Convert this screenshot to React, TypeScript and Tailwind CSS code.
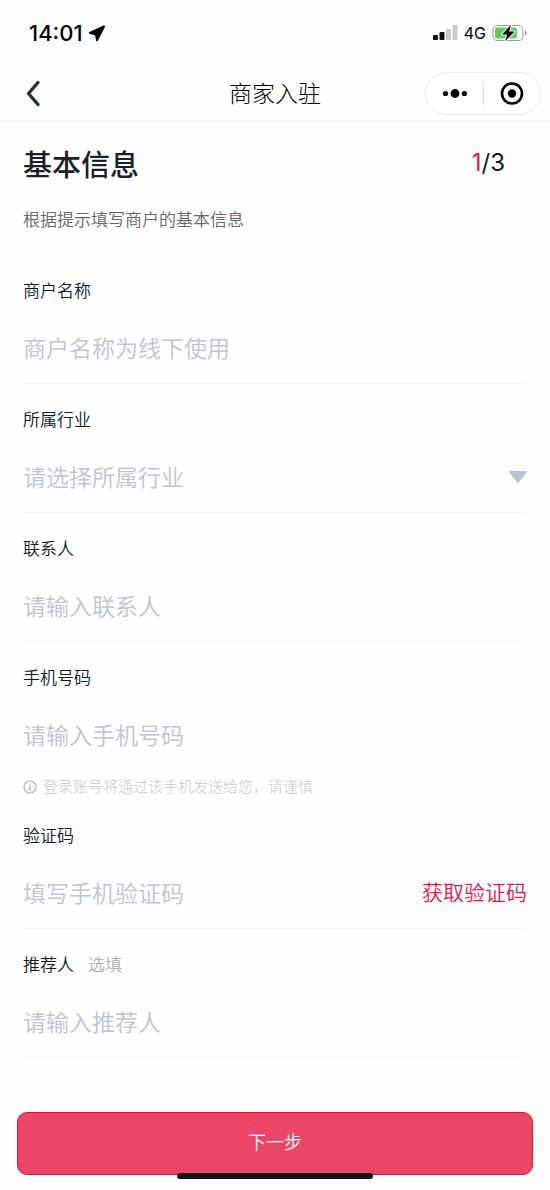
import { FormEvent, ReactNode, useState } from 'react';

interface FieldProps {
  id: string;
  label: string;
  optional?: string;
  children: ReactNode;
}

const controlClass =
  'w-full min-w-0 flex-1 appearance-none bg-transparent text-[23px] font-[350] text-[#30343c] outline-none placeholder:text-[#c1c4cd] placeholder:opacity-100';

const Field = ({ id, label, optional, children }: FieldProps) => (
  <div className="border-b border-[#f7f7f8] pt-[23px]">
    <div className="mb-[10px] flex items-center leading-6">
      <label htmlFor={id} className="text-[17px] font-[350] text-[#15181f]">
        {label}
      </label>
      {optional && (
        <span className="ml-[14px] text-[17px] font-[350] text-[#b0b0b2]">
          {optional}
        </span>
      )}
    </div>
    <div className="relative flex h-[71px] items-center">{children}</div>
  </div>
);

const StatusBar = () => (
  <div className="flex h-[66px] items-center justify-between pr-[22px] pl-[29px]">
    <div className="flex items-center gap-[5px] font-['Inter'] text-[22px] font-medium text-black">
      <span>14:01</span>
      <svg width="18" height="17" viewBox="0 0 18 17" aria-hidden="true">
        <path
          d="M16 1.500 1.800 7.900 8 9.500 9 15.200Z"
          fill="#000"
          stroke="#000"
          strokeWidth="2"
          strokeLinejoin="round"
        />
      </svg>
    </div>
    <div className="flex items-center gap-[6px]">
      <svg width="25" height="16" viewBox="0 0 25 16" aria-hidden="true">
        <rect x="0" y="10" width="5" height="5" rx="1" fill="#111" />
        <rect x="6.500" y="7" width="5" height="8" rx="1" fill="#111" />
        <rect x="13" y="4" width="5" height="11" rx="1" fill="#ccc" />
        <rect x="19.500" y="0" width="5" height="15" rx="1" fill="#ccc" />
      </svg>
      <span className="font-['Inter'] text-base text-black">4G</span>
      <svg width="36" height="18" viewBox="0 0 36 18" aria-hidden="true">
        <rect
          x="1"
          y="1.500"
          width="30"
          height="15"
          rx="4.500"
          fill="#fff"
          stroke="#9b9b9b"
        />
        <rect x="3" y="3.500" width="22" height="11" rx="2.500" fill="#5fcb62" />
        <path d="M33 6.500c2 .8 2 4.200 0 5Z" fill="#8f8f8f" />
        <path
          d="M19 .8 10 10.400h5.200L13 17.200 22.600 7.600h-5.400Z"
          fill="#000"
          stroke="#fff"
          strokeWidth="2"
          strokeLinejoin="round"
          paintOrder="stroke"
        />
      </svg>
    </div>
  </div>
);

const NavBar = () => (
  <header className="grid h-14 grid-cols-[1fr_auto_1fr] items-center border-b border-[#ececed] px-[9px]">
    <button type="button" aria-label="返回" className="w-12 pl-[15px]">
      <svg width="18" height="28" viewBox="0 0 18 28" aria-hidden="true">
        <path
          d="M14 2.500 4.500 13.500 14 24.500"
          fill="none"
          stroke="#25303d"
          strokeWidth="3.400"
          strokeLinecap="round"
          strokeLinejoin="round"
        />
      </svg>
    </button>
    <h1 className="pb-[2px] text-[23px] font-light text-black">商家入驻</h1>
    <div className="flex h-[43px] w-[116px] items-center justify-self-end rounded-full border border-[#ebebec] bg-white">
      <button
        type="button"
        aria-label="更多"
        className="flex flex-1 justify-center"
      >
        <svg width="26" height="10" viewBox="0 0 26 10" aria-hidden="true">
          <circle cx="4.500" cy="4.500" r="2.600" />
          <circle cx="14" cy="4.500" r="4.400" />
          <circle cx="23.400" cy="4.500" r="2.600" />
        </svg>
      </button>
      <span className="h-[25px] w-px bg-[#dededf]" />
      <button
        type="button"
        aria-label="关闭"
        className="flex flex-1 justify-center"
      >
        <svg width="24" height="24" viewBox="0 0 24 24" aria-hidden="true">
          <circle
            cx="12"
            cy="11.500"
            r="10"
            fill="none"
            stroke="#000"
            strokeWidth="2.600"
          />
          <circle cx="12" cy="11.500" r="4.200" />
        </svg>
      </button>
    </div>
  </header>
);

export default function App() {
  const [industry, setIndustry] = useState('');

  const handleSubmit = (e: FormEvent) => e.preventDefault();

  return (
    <div className="relative flex min-h-screen flex-col bg-[#fefefe] font-['Noto_Sans_CJK_SC',sans-serif]">
      <StatusBar />
      <NavBar />

      <form onSubmit={handleSubmit} className="flex flex-1 flex-col">
        <div className="px-[23px]">
          <div className="flex items-center justify-between pt-[19px] pr-[22px] leading-[44px]">
            <h2 className="text-[29px] font-medium text-[#1b2129]">基本信息</h2>
            <p className="font-['Inter'] text-[24px] text-[#15181f]">
              <span className="text-[#ec1550]">1</span>/3
            </p>
          </div>
          <p className="mt-[22px] mb-6 text-[17px] leading-6 font-[350] text-[#666]">
            根据提示填写商户的基本信息
          </p>

          <Field id="merchant" label="商户名称">
            <input
              id="merchant"
              className={controlClass}
              placeholder="商户名称为线下使用"
            />
          </Field>
          <Field id="industry" label="所属行业">
            <select
              id="industry"
              value={industry}
              onChange={(e) => setIndustry(e.target.value)}
              className={`${controlClass} ${industry ? '' : 'text-[#c1c4cd]!'}`}
            >
              <option value="">请选择所属行业</option>
            </select>
            <svg
              width="18"
              height="12"
              viewBox="0 0 18 12"
              className="pointer-events-none absolute right-0"
              aria-hidden="true"
            >
              <path
                d="M1 0h16c.900 0 1.200.7.7 1.300L10 11.200c-.6.7-1.400.7-2 0L.3 1.300C-.2.700.1 0 1 0Z"
                fill="#bfc2cc"
              />
            </svg>
          </Field>
          <Field id="contact" label="联系人">
            <input
              id="contact"
              className={controlClass}
              placeholder="请输入联系人"
            />
          </Field>
          <Field id="phone" label="手机号码">
            <input
              id="phone"
              type="tel"
              className={controlClass}
              placeholder="请输入手机号码"
            />
          </Field>
          <p className="flex h-[29px] items-center gap-[6px] pt-[2px] text-[15px] font-light text-[#cbcbcd]">
            <svg width="14" height="14" viewBox="0 0 14 14" aria-hidden="true">
              <circle
                cx="7"
                cy="7"
                r="6"
                fill="none"
                stroke="#b5b5b7"
                strokeWidth="1.200"
              />
              <path
                d="M7 3.500v1.300M6 6.300h1v3.500M5.600 10h2.800"
                fill="none"
                stroke="#b5b5b7"
                strokeWidth="1.200"
              />
            </svg>
            登录账号将通过该手机发送给您，请谨慎
          </p>
          <Field id="code" label="验证码">
            <input
              id="code"
              className={controlClass}
              placeholder="填写手机验证码"
            />
            <button
              type="button"
              className="shrink-0 pb-[2px] text-[21px] font-[350] text-[#e5164f]"
            >
              获取验证码
            </button>
          </Field>
          <Field id="referrer" label="推荐人" optional="选填">
            <input
              id="referrer"
              className={controlClass}
              placeholder="请输入推荐人"
            />
          </Field>
        </div>

        <div className="mt-auto px-[17px] pt-8 pb-[15px]">
          <button
            type="submit"
            className="h-[63px] w-full rounded-[10px] border border-[#e30e4c] bg-[#eb4667] pb-[6px] text-lg font-[350] text-white"
          >
            下一步
          </button>
        </div>
      </form>

      {/* Home indicator */}
      <div className="absolute bottom-[11px] left-1/2 h-[6px] w-[196px] -translate-x-1/2 rounded-full bg-[#151515]" />
    </div>
  );
}
